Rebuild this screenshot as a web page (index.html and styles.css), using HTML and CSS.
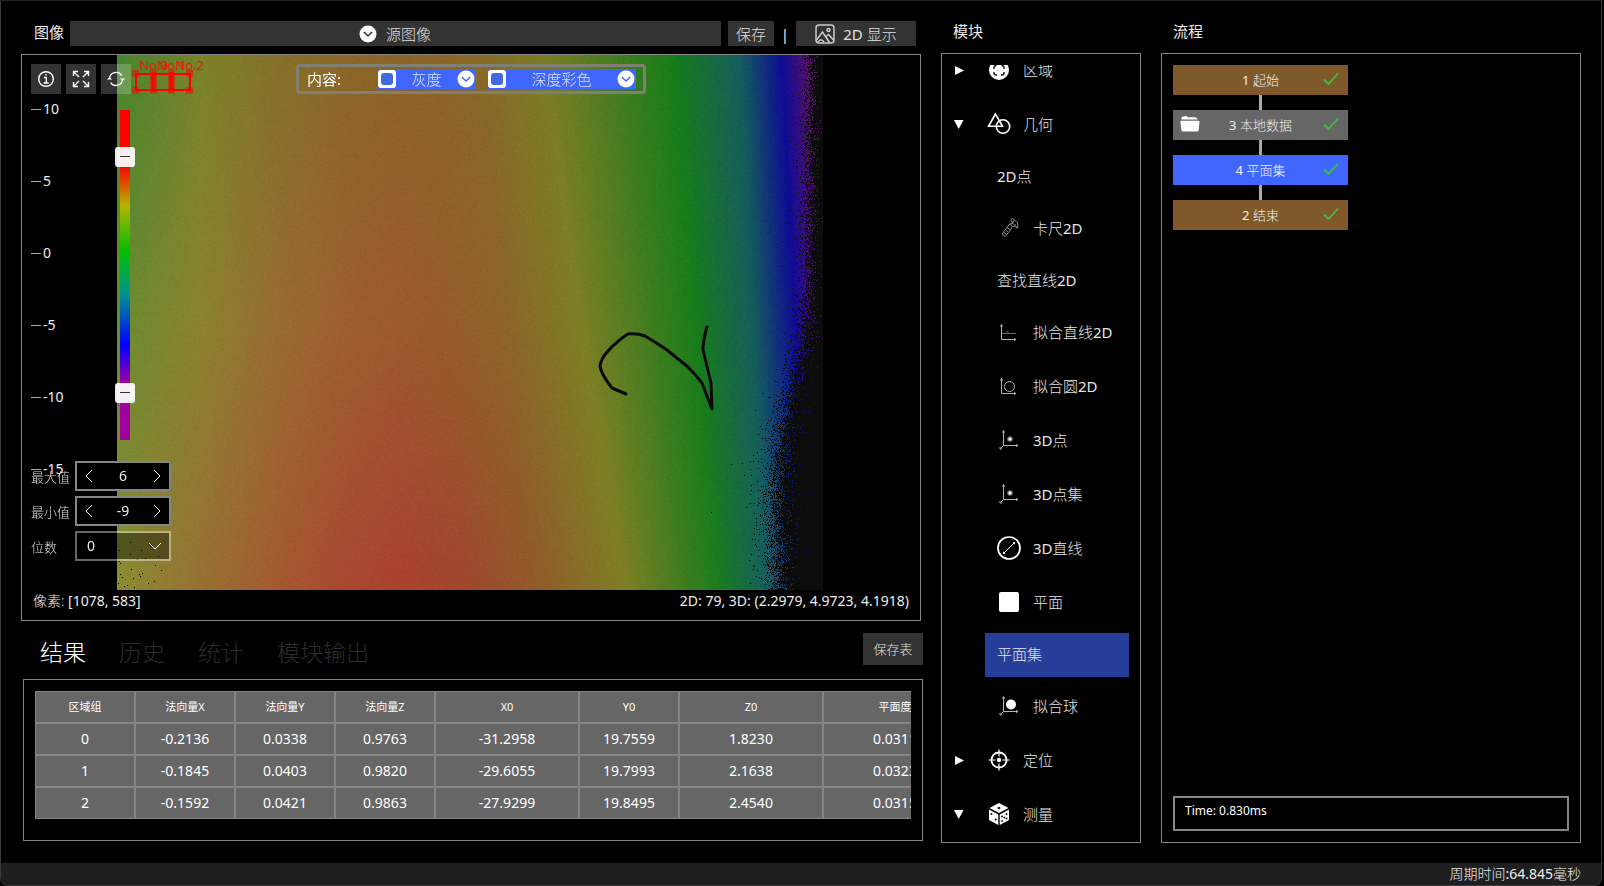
FILE: index.html
```html
<!DOCTYPE html>
<html lang="zh-CN">
<head>
<meta charset="utf-8">
<meta name="viewport" content="width=device-width, initial-scale=1">
<title>平面集</title>
<link rel="stylesheet" href="styles.css">
</head>
<body>
<svg class="defs" aria-hidden="true">
  <symbol id="i-drop" viewBox="0 0 18 18"><circle cx="9" cy="9" r="8.5" fill="#fff"/><path d="M4.8 7l4.2 4 4.2-4" fill="none" stroke="currentColor" stroke-width="1.5"/></symbol>
  <symbol id="i-check" viewBox="0 0 16 14"><path d="M1 7.5l4.5 4.500L15 1.500" fill="none" stroke="#3fc03f" stroke-width="1.800"/></symbol>
  <symbol id="i-axes2" viewBox="0 0 24 24"><path d="M4.500 5v14.500h14M3.500 6.500l1-2 1 2M17 18.500l2 1-2 1" fill="none" stroke="#b4b4b4"/></symbol>
  <symbol id="i-axes3" viewBox="0 0 24 24"><path d="M6.500 3v14.500h14M6.500 17.500l-3 3M5.500 4.500l1-2 1 2M19 16.500l2 1-2 1M3 18.800v2.200h2" fill="none" stroke="#b4b4b4"/></symbol>
</svg>
<div class="window">
  <main class="main">
    <section class="work">
      <header class="source">
        <label class="title" for="src">图像</label>
        <div class="source-box">
          <svg class="drop"><use href="#i-drop"/></svg>
          <select id="src" class="plain"><option>源图像</option></select>
        </div>
        <button class="btn btn-save">保存</button>
        <span class="bar">|</span>
        <button class="btn btn-show">
          <svg width="20" height="20" viewBox="0 0 20 20" fill="none" stroke="#ccc" stroke-width="1.500"><rect x="1" y="1" width="18" height="18" rx="3"/><path d="M1.500 16l6-8 7 10.500M10.500 13l3-2.500 5.500 6M3 18c2-3 4-3 6 0"/><circle cx="13.500" cy="6" r="1.500"/></svg>
          <span><b>2D</b> 显示</span>
        </button>
      </header>

      <section class="viewer">
        <div class="stage"><canvas id="depth" class="depth" width="706" height="535"></canvas></div>
        <footer class="readout"><span>像素: <b>[1078, 583]</b></span><b>2D: 79, 3D: (2.2979, 4.9723, 4.1918)</b></footer>

        <svg class="rois" width="80" height="40" viewBox="0 0 80 40">
          <g class="roi-names"><text x="9" y="15">No.0</text><text x="27" y="15">No.1</text><text x="45" y="15">No.2</text></g>
          <path d="M6 19h54v16H6zM23 19v16M41 19v16" fill="none" stroke="#f00" stroke-width="2"/>
          <path d="M20 15h7v24h-7zM38 15h7v24h-7z" fill="#f00" fill-opacity=".45"/>
          <path d="M21 17h5v20h-5zM39 17h5v20h-5z" fill="#f00" fill-opacity=".6"/>
          <path d="M2 15h7v7H2zM2 32h7v7H2zM56 15h7v7h-7zM56 32h7v7h-7z" fill="#f00" fill-opacity=".5"/>
        </svg>

        <div class="tools">
          <button class="tool" aria-label="信息"><svg viewBox="0 0 18 18"><circle cx="9" cy="9" r="7.300"/><path d="M7 7.500h2.300V13M6.500 13h5.200M8.300 4.800h1.400"/></svg></button>
          <button class="tool" aria-label="全屏"><svg viewBox="0 0 18 18"><path d="M1.500 6V1.500H6M12 1.500h4.500V6M16.500 12v4.500H12M6 16.500H1.500V12M2 2l5 5M16 2l-5 5M2 16l5-5M16 16l-5-5"/></svg></button>
          <button class="tool" aria-label="刷新"><svg viewBox="0 0 20 18"><path d="M2.800 9a7.300 7.300 0 0 1 13.500-3.800M17.300 9A7.300 7.300 0 0 1 4 13"/><path d="M-.2 9.500L2.800 7l3 2.500zM14.300 8.500l3 2.500 3-2.500z" fill="#fff" stroke="none"/></svg></button>
        </div>

        <div class="content-bar">
          <span class="content-title">内容:</span>
          <div class="layer layer-gray"><input type="checkbox" aria-label="灰度图层"><select class="plain" aria-label="灰度"><option>灰度</option></select><svg class="drop"><use href="#i-drop"/></svg></div>
          <div class="layer layer-depth"><input type="checkbox" aria-label="深度图层"><select class="plain" aria-label="深度彩色"><option>深度彩色</option></select><svg class="drop"><use href="#i-drop"/></svg></div>
        </div>

        <ol class="ticks"><li>10</li><li>5</li><li>0</li><li>-5</li><li>-10</li><li>-15</li></ol>
        <div class="ramp"><span class="grip grip-max"></span><span class="grip grip-min"></span></div>

        <div class="ranges">
          <label for="vmax">最大值</label>
          <div class="spin"><button aria-label="减小最大值"><svg viewBox="0 0 8 14"><path d="M7 1L1 7l6 6"/></svg></button><input id="vmax" value="6"><button aria-label="增大最大值"><svg viewBox="0 0 8 14"><path d="M1 1l6 6-6 6"/></svg></button></div>
          <label for="vmin">最小值</label>
          <div class="spin"><button aria-label="减小最小值"><svg viewBox="0 0 8 14"><path d="M7 1L1 7l6 6"/></svg></button><input id="vmin" value="-9"><button aria-label="增大最小值"><svg viewBox="0 0 8 14"><path d="M1 1l6 6-6 6"/></svg></button></div>
          <label for="digits">位数</label>
          <div class="spin digits"><select id="digits" class="plain"><option>0</option></select><svg width="14" height="8" viewBox="0 0 14 8"><path d="M1 1l6 6 6-6"/></svg></div>
        </div>
      </section>

      <div class="result-head">
        <nav class="tabs"><button class="tab on">结果</button><button class="tab">历史</button><button class="tab">统计</button><button class="tab">模块输出</button></nav>
        <button class="btn btn-table">保存表</button>
      </div>
      <section class="results">
        <div class="scroll">
          <table>
            <colgroup><col class="n"><col class="n"><col class="n"><col class="n"><col class="w"><col class="n"><col class="w"><col class="w"></colgroup>
            <thead><tr><th>区域组</th><th>法向量X</th><th>法向量Y</th><th>法向量Z</th><th>X0</th><th>Y0</th><th>Z0</th><th>平面度</th></tr></thead>
            <tbody>
              <tr><td>0</td><td>-0.2136</td><td>0.0338</td><td>0.9763</td><td>-31.2958</td><td>19.7559</td><td>1.8230</td><td>0.0311</td></tr>
              <tr><td>1</td><td>-0.1845</td><td>0.0403</td><td>0.9820</td><td>-29.6055</td><td>19.7993</td><td>2.1638</td><td>0.0323</td></tr>
              <tr><td>2</td><td>-0.1592</td><td>0.0421</td><td>0.9863</td><td>-27.9299</td><td>19.8495</td><td>2.4540</td><td>0.0315</td></tr>
            </tbody>
          </table>
        </div>
      </section>
    </section>

    <section class="side">
      <h2 class="title">模块</h2>
      <div class="panel">
        <div class="clip">
          <div class="tree">
            <button class="item group"><svg class="arrow" viewBox="0 0 12 12"><path d="M2 2l9 4.500L2 11z"/></svg>
              <svg class="icon" viewBox="0 0 24 24"><circle cx="12" cy="12" r="10" fill="#fff"/><path d="M7 11V9.500Q7 7.500 9.500 7.500M14.500 7.500Q17 7.500 17 9.500V11M7 14v1.500Q7 17 9.500 17h.5M14 17h.5Q17 17 17 15.500V14M10.500 1v3M13.500 1v3" fill="none" stroke="#000" stroke-width="1.300"/></svg><span>区域</span></button>
            <button class="item group"><svg class="arrow" viewBox="0 0 12 12"><path d="M1 2h9.500L5.700 11z"/></svg>
              <svg class="icon" viewBox="0 0 24 24" fill="none" stroke="#fff" stroke-width="1.600"><path d="M8.500 2L1.500 14.300h14z"/><circle cx="16" cy="14.500" r="6.700"/></svg><span>几何</span></button>
            <button class="item"><span><b>2D</b>点</span></button>
            <button class="item pic"><svg class="icon" viewBox="0 0 24 24" fill="none" stroke="#999" stroke-width=".9"><path d="M5 18l5-6.500 3.500 2.500L8 20.500zM10 11.500l2.500-3.500 3 2-2 4M12.500 8l3-.5-1.500-4 1.500-1 5 4 .5 5-1.500.5-.5-2-3 .5M6.500 16l3 2.500M8.500 14l3 2.500M15.500 7.500l3.500 2M17 4l-1.500 3.500"/></svg><span>卡尺<b>2D</b></span></button>
            <button class="item"><span>查找直线<b>2D</b></span></button>
            <button class="item pic"><svg class="icon" viewBox="0 0 24 24"><use href="#i-axes2"/><path d="M5 13.500h14M9 12.500l1.500-1 1.500 1" stroke="#666" fill="none"/></svg><span>拟合直线<b>2D</b></span></button>
            <button class="item pic"><svg class="icon" viewBox="0 0 24 24"><use href="#i-axes2"/><circle cx="12.500" cy="12.500" r="5" fill="none" stroke="#b4b4b4"/></svg><span>拟合圆<b>2D</b></span></button>
            <button class="item pic"><svg class="icon" viewBox="0 0 24 24"><use href="#i-axes3"/><circle cx="13" cy="11" r="2.800" fill="#777"/><circle cx="13" cy="11" r="1.500" fill="#fff"/></svg><span><b>3D</b>点</span></button>
            <button class="item pic"><svg class="icon" viewBox="0 0 24 24"><use href="#i-axes3"/><circle cx="13" cy="11" r="2.800" fill="#777"/><circle cx="13" cy="11" r="1.500" fill="#fff"/></svg><span><b>3D</b>点集</span></button>
            <button class="item pic"><svg class="icon" viewBox="0 0 24 24"><circle cx="12" cy="12" r="11" fill="none" stroke="#fff" stroke-width="1.700"/><path d="M7 17L17 7" stroke="#fff"/><path d="M6 15.500L8.500 18 6 18zM15.500 6L18 6v2.500z" fill="#fff"/></svg><span><b>3D</b>直线</span></button>
            <button class="item pic"><svg class="icon" viewBox="0 0 24 24"><rect x="2" y="2" width="20" height="20" rx="2" fill="#fff"/></svg><span>平面</span></button>
            <button class="item picked">平面集</button>
            <button class="item pic"><svg class="icon" viewBox="0 0 24 24"><use href="#i-axes3"/><circle cx="14" cy="10.500" r="5" fill="#fff"/></svg><span>拟合球</span></button>
            <button class="item group"><svg class="arrow" viewBox="0 0 12 12"><path d="M2 2l9 4.500L2 11z"/></svg>
              <svg class="icon" viewBox="0 0 24 24" fill="none" stroke="#fff" stroke-width="1.800"><circle cx="12" cy="12" r="7.500"/><path d="M12 1.500v7M12 15.500v7M1.500 12h7M15.500 12h7" stroke-width="1.200"/><circle cx="12" cy="12" r="2.200" fill="#fff" stroke="none"/></svg><span>定位</span></button>
            <button class="item group"><svg class="arrow" viewBox="0 0 12 12"><path d="M1 2h9.500L5.700 11z"/></svg>
              <svg class="icon" viewBox="0 0 24 24"><path d="M12 1l9.500 5L12 11 2.500 6zM2 7.500l9.300 5V23L2 18zM22 7.500l-9.300 5V23l9.300-5z" fill="#fff"/><g fill="#000"><ellipse cx="12" cy="6" rx="1.500" ry="1"/><circle cx="4.500" cy="12" r="1"/><circle cx="8.700" cy="17.500" r="1"/><circle cx="15" cy="14.500" r=".9"/><circle cx="19.500" cy="12" r=".9"/><circle cx="15" cy="19" r=".9"/><circle cx="19.500" cy="16.500" r=".9"/><circle cx="17.300" cy="15.500" r=".9"/></g></svg><span>测量</span></button>
          </div>
        </div>
      </div>
    </section>

    <section class="side flow">
      <h2 class="title">流程</h2>
      <div class="panel">
        <div class="nodes">
          <button class="node edge"><b>1</b> 起始<svg class="check"><use href="#i-check"/></svg></button>
          <i class="link"></i>
          <button class="node data"><svg class="folder" viewBox="0 0 20 16"><path d="M1.500 3.500V1.800Q1.500 1 2.300.8L6 0q1 0 1.600 1.200H15q2 0 2.500 2.300zM1.200 4.700h17.400q1 0 .9 1l-.8 8.300q-.2 1.500-1.700 1.500H3q-1.500 0-1.700-1.500L.4 5.700q0-1 .8-1z" fill="#fff"/></svg><b>3</b> 本地数据<svg class="check"><use href="#i-check"/></svg></button>
          <i class="link"></i>
          <button class="node active"><b>4</b> 平面集<svg class="check"><use href="#i-check"/></svg></button>
          <i class="link"></i>
          <button class="node edge"><b>2</b> 结束<svg class="check"><use href="#i-check"/></svg></button>
        </div>
        <output class="time">Time: 0.830ms</output>
      </div>
    </section>
  </main>
  <footer class="status">周期时间<b>:64.845</b>毫秒</footer>
</div>
<script src="depth.js"></script>
</body>
</html>
```
FILE: styles.css
```css
* { box-sizing: border-box; }
body {
  margin: 0;
  background: #000;
  color: #eee;
  font: 300 15px/20px "Noto Sans", "Noto Sans CJK SC", sans-serif;
}
b { font-weight: 400; }
button, input, select { font: inherit; color: inherit; }
button { border: 0; padding: 0; background: none; cursor: pointer; }
.defs { position: absolute; width: 0; height: 0; }

.window {
  display: flex;
  flex-direction: column;
  height: 100vh;
  min-height: 700px;
  margin-right: 2px;
  border: 1px solid #3a3a3a;
  border-top-color: #222;
  border-radius: 0 0 8px 8px;
  overflow: hidden;
}
.main {
  flex: 1;
  min-height: 0;
  display: grid;
  grid-template-columns: minmax(0, 902fr) 200px minmax(0, 422fr);
  column-gap: 18px;
  padding: 0 20px 20px;
}
.status {
  height: 22px;
  padding: 0 20px;
  background: #1f1f1f;
  text-align: right;
  line-height: 22px;
  font-size: 14px;
}
.title { margin: 0; font-size: 15px; font-weight: 400; line-height: 20px; }
.plain { appearance: none; border: 0; padding: 0; background: none; outline: 0; }
.plain option { color: #000; }
.drop { width: 18px; height: 18px; color: #333; flex: none; }
.btn { background: #333; color: #e0e0e0; }

/* image source row */
.work { display: flex; flex-direction: column; min-width: 0; min-height: 0; padding-bottom: 2px; }
.source { display: flex; align-items: center; height: 53px; padding: 12px 7px 0 13px; }
.source .title { width: 36px; padding-bottom: 4px; }
.source-box {
  flex: 1;
  display: flex;
  align-items: center;
  justify-content: center;
  gap: 9px;
  height: 25px;
  background: #333;
  color: #e0e0e0;
}
.source-box .plain { line-height: 20px; }
.btn-save { width: 46px; height: 25px; margin-left: 7px; }
.bar { width: 22px; text-align: center; font-weight: 400; }
.btn-show { width: 120px; height: 25px; display: flex; align-items: center; justify-content: center; gap: 8px; }

/* depth viewer */
.viewer {
  position: relative;
  flex: 1;
  min-height: 0;
  display: flex;
  flex-direction: column;
  margin-right: 2px;
  border: 1px solid #858585;
}
.stage { flex: 1; min-height: 0; display: grid; grid-template: minmax(0, 1fr) / 95fr 706fr 97fr; }
.depth { grid-column: 2; width: 100%; height: 100%; image-rendering: pixelated; }
.readout { display: flex; justify-content: space-between; height: 30px; padding: 0 11px; line-height: 22px; font-size: 14px; }

.tools { position: absolute; left: 9px; top: 9px; display: flex; gap: 5px; }
.tool { width: 30px; height: 30px; display: grid; place-items: center; background: rgba(255, 255, 255, .2); }
.tool svg { width: 18px; height: 18px; fill: none; stroke: #fff; stroke-width: 1.4; overflow: visible; }
.rois { position: absolute; left: 108px; top: 0; }
.roi-names { font-size: 13px; font-weight: 400; fill: #f01800; }

.content-bar {
  position: absolute;
  left: 274px;
  top: 9px;
  display: flex;
  align-items: center;
  width: 350px;
  height: 30px;
  padding: 0 7px 0 8px;
  border: 3px solid #7f7f74;
  border-radius: 4px;
}
.content-title { width: 71px; color: #fff; font-weight: 400; }
.layer { display: flex; align-items: center; height: 20px; padding-right: 1px; background: #3f66ff; }
.layer .plain { flex: 1; min-width: 0; text-align-last: center; line-height: 20px; color: #dfe5ff; }
.layer .drop { color: #3f66ff; }
.layer input { appearance: none; width: 18px; height: 18px; margin: 0; padding: 3px; border-radius: 3px; background: #fff; }
.layer input::before { content: ""; display: block; width: 12px; height: 12px; border-radius: 3px; background: #4169e1; }
.layer-gray { width: 98px; margin-right: 12px; }
.layer-depth { width: 148px; }

.ticks { position: absolute; left: 9px; top: 44px; margin: 0; padding: 0; list-style: none; font-size: 14px; font-weight: 400; }
.ticks li { display: flex; align-items: center; gap: 2px; height: 20px; margin-bottom: 52px; }
.ticks li::before { content: ""; width: 10px; height: 1px; background: #aaa; }
.ramp {
  position: absolute;
  left: 98px;
  top: 55px;
  width: 10px;
  height: 330px;
  background: linear-gradient(#f00 17%, #b4b400 29%, #00be00 43%, #009191 56%, #00f 71%, #a000a0 83%);
}
.grip { position: absolute; left: -5px; width: 20px; height: 20px; border-radius: 3px; background: rgba(255, 255, 255, .93); }
.grip::after { content: ""; position: absolute; left: 5px; top: 9px; width: 10px; height: 1px; background: #333; }
.grip-max { top: 37px; }
.grip-min { top: 273px; }

.ranges { position: absolute; left: 9px; top: 406px; display: grid; grid-template-columns: 44px 96px; row-gap: 5px; }
.ranges label { padding-top: 6px; font-size: 13px; color: #ddd; }
.spin { display: flex; align-items: center; height: 30px; border: 2px solid #858585; background: #000; font-size: 14px; font-weight: 400; }
.spin button { width: 24px; height: 26px; display: grid; place-items: center; flex: none; }
.spin svg { fill: none; stroke: #fff; stroke-width: 1; }
.spin button svg { width: 8px; height: 14px; }
.spin input { flex: 1; min-width: 0; width: 20px; padding: 0; border: 0; background: none; text-align: center; }
.spin.digits { padding: 0 7px 0 10px; background: rgba(0, 0, 0, .4); background-clip: padding-box; border-color: rgba(255, 255, 255, .4); }
.digits .plain { flex: 1; min-width: 0; }

/* results */
.result-head { display: flex; justify-content: space-between; align-items: center; height: 32px; margin: 12px 0 14px 19px; }
.tabs { display: flex; gap: 33px; padding-top: 6px; }
.tab { font-size: 23px; line-height: 32px; color: #2c2c2c; }
.tab.on { color: #fff; }
.btn-table { width: 60px; height: 32px; font-size: 13px; }
.results { margin-left: 2px; padding: 11px 11px 21px; border: 1px solid #858585; }
.scroll { overflow: hidden; }
table { width: 932px; table-layout: fixed; border-spacing: 0; text-align: center; }
.n { width: 100px; }
.w { width: 144px; }
th, td { height: 32px; padding: 0; border: 1px solid #858585; background: #666; color: #fff; font-weight: 400; font-size: 14px; }
th { font-size: 11px; }

/* module tree and flow */
.side { display: flex; flex-direction: column; min-width: 0; min-height: 0; padding-top: 20px; }
.side .title { padding-left: 12px; margin-bottom: 12px; }
.panel { flex: 1; min-height: 0; display: flex; flex-direction: column; padding: 11px; border: 1px solid #858585; }
.clip { flex: 1; min-height: 0; overflow: hidden; }
.tree { display: flex; flex-direction: column; gap: 6px; margin-top: -18px; }
.item { flex: none; display: flex; align-items: center; gap: 12px; height: 44px; margin-left: 32px; padding: 0 0 2px 12px; color: #e6e6e6; white-space: nowrap; }
.pic, .group { height: 48px; }
.group { margin-left: 0; padding-left: 0; }
.icon { width: 24px; height: 24px; flex: none; }
.arrow { width: 12px; height: 12px; margin-right: 10px; fill: #fff; }
.picked { background: #263d99; }

.flow { padding-left: 2px; }
.nodes { flex: 1; display: flex; flex-direction: column; align-items: center; width: 175px; }
.node { position: relative; width: 100%; height: 30px; font-size: 13px; color: #eee; }
.edge { background: #80592b; }
.data { background: #666; }
.active { background: #3f66ff; }
.link { width: 3px; height: 15px; background: #aaa; }
.check { position: absolute; right: 9px; top: 7px; width: 16px; height: 14px; }
.folder { position: absolute; left: 7px; top: 6px; width: 20px; height: 16px; }
.time { height: 35px; padding: 3px 10px; border: 2px solid #858585; font-size: 12px; font-weight: 400; color: #fff; }
```
FILE: depth.js
```javascript
(function () {
  var canvas = document.getElementById('depth');
  var ctx = canvas.getContext('2d');
  var W = canvas.width, H = canvas.height;
  var seed = 7;
  function rnd() { seed = (seed * 1664525 + 1013904223) >>> 0; return seed / 4294967296; }

  // Colour stops: x position and colour at the top, middle and bottom rows.
  var stops = [
    [[0, 0, 0], [68, 132, 45], [105, 140, 48], [138, 140, 50]],
    [[83, 83, 83], [122, 130, 42], [140, 130, 48], [152, 112, 50]],
    [[163, 163, 163], [132, 112, 40], [152, 107, 48], [164, 88, 48]],
    [[225, 225, 225], [137, 103, 39], [157, 95, 48], [169, 72, 48]],
    [[275, 280, 285], [139, 99, 38], [156, 89, 46], [170, 65, 47]],
    [[315, 330, 345], [138, 100, 38], [150, 91, 42], [161, 70, 45]],
    [[365, 385, 415], [135, 105, 38], [141, 99, 40], [146, 88, 42]],
    [[428, 463, 508], [122, 124, 36], [125, 126, 36], [127, 126, 36]],
    [[555, 578, 601], [22, 124, 26], [24, 124, 26], [26, 124, 28]],
    [[623, 636, 648], [20, 92, 92], [20, 92, 92], [20, 95, 92]],
    [[664, 677, 690], [14, 12, 148], [14, 12, 148], [14, 20, 138]],
    [[692, 702, 716], [88, 15, 105], [80, 15, 112], [40, 15, 118]]
  ];
  // Rows where the sensor loses the surface: y, centre x, spread.
  var edge = [[0, 692, 7], [225, 690, 8], [290, 684, 10], [345, 670, 12], [395, 661, 13], [445, 657, 14], [535, 661, 13]];

  function blend(v, t) {
    return t < 1 ? v[0] + (v[1] - v[0]) * t : v[1] + (v[2] - v[1]) * (t - 1);
  }
  var img = ctx.createImageData(W, H), d = img.data;
  for (var y = 0; y < H; y++) {
    var t = y / H * 2, row = stops.map(function (s) {
      return { x: blend(s[0], t), c: [0, 1, 2].map(function (k) { return blend([s[1][k], s[2][k], s[3][k]], t); }) };
    });
    var e = 0;
    while (e < edge.length - 2 && y > edge[e + 1][0]) e++;
    var f = (y - edge[e][0]) / (edge[e + 1][0] - edge[e][0]);
    var mid = edge[e][1] + (edge[e + 1][1] - edge[e][1]) * f;
    var spread = edge[e][2] + (edge[e + 1][2] - edge[e][2]) * f;
    for (var x = 0; x < W; x++) {
      var i = 0;
      while (i < row.length - 2 && x > row[i + 1].x) i++;
      var u = Math.min(1, (x - row[i].x) / (row[i + 1].x - row[i].x));
      var o = (y * W + x) * 4, n = (rnd() - .5) * 7;
      var lost = 1 / (1 + Math.exp(-(x - mid) / spread * 2.4)) > rnd();
      if (x < 50 && y > 470 && rnd() < .03 * (1 - x / 50) * (y - 470) / 65) lost = true;
      for (var k = 0; k < 3; k++) {
        d[o + k] = lost ? 12 : row[i].c[k] + (row[i + 1].c[k] - row[i].c[k]) * u + n;
      }
      d[o + 3] = 255;
    }
  }
  ctx.putImageData(img, 0, 0);

  // Marker stroke on the measured surface.
  ctx.strokeStyle = '#080a06';
  ctx.lineWidth = 3;
  ctx.lineJoin = 'round';
  ctx.lineCap = 'round';
  ctx.stroke(new Path2D('M509 339L495 333Q484 319 483 311Q484 304 490 297Q500 286 511 279Q520 278 528 281Q540 288 550 295L571 312Q579 320 585 328L595 354L594 328L586 295Q586 285 590 272'));
})();
```
